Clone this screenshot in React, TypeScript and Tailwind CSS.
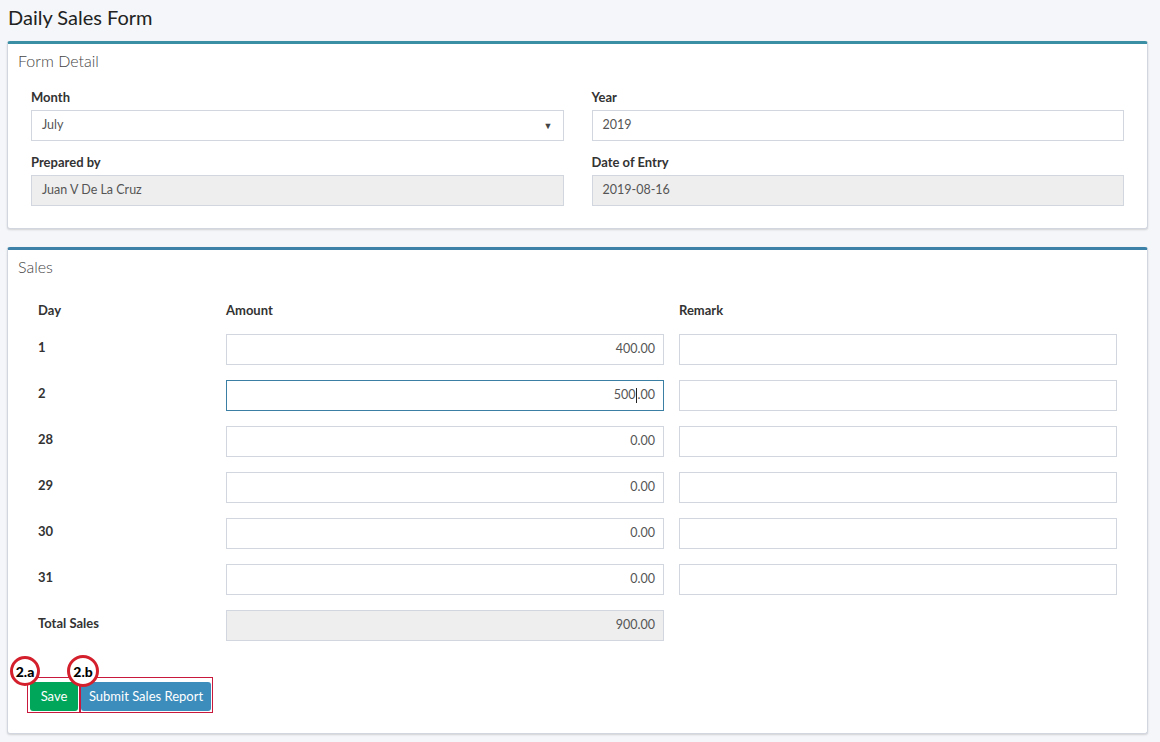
const FONT = { fontFamily: "Lato, 'Open Sans', 'Liberation Sans', sans-serif" };

const days = [
  { day: "1", amount: "400.00" },
  { day: "2", amount: "500.00", focus: true },
  { day: "28", amount: "0.00" },
  { day: "29", amount: "0.00" },
  { day: "30", amount: "0.00" },
  { day: "31", amount: "0.00" },
];

function Field({ label, value, disabled, select }: { label: string; value: string; disabled?: boolean; select?: boolean }) {
  return (
    <div>
      <div className="h-[18px] text-[13px] font-bold leading-[18px] text-[#333]">{label}</div>
      <div
        className={`mt-[4px] flex h-[31px] items-center justify-between border border-[#d2d6de] px-[10px] text-[12.5px] text-[#555] ${
          disabled ? "bg-[#eeeeee]" : "bg-white"
        }`}
      >
        <span>{value}</span>
        {select && <span className="text-[9px] text-[#444]">▼</span>}
      </div>
    </div>
  );
}

function Box({ title, color, children }: { title: string; color: string; children: React.ReactNode }) {
  return (
    <div
      className="rounded-[3px] border border-t-[3px] border-[#d2d6de] bg-white shadow-[0_1px_2px_rgba(0,0,0,0.15)]"
      style={{ borderTopColor: color }}
    >
      <div className="flex h-[34px] items-center px-[10px] text-[16px] font-light text-[#444]">{title}</div>
      {children}
    </div>
  );
}

export default function App() {
  return (
    <div className="min-h-[742px] bg-[#f4f6f9] pl-[7px] pr-[12px]" style={FONT}>
      <h1 className="h-[41px] pt-[4px] pl-[1px] text-[20px] leading-[26px] font-normal text-[#222]">Daily Sales Form</h1>

      <Box title="Form Detail" color="#3b8fa4">
        <div className="grid grid-cols-2 gap-x-[28px] gap-y-[12px] px-[23px] pt-[10px] pb-[22px]">
          <Field label="Month" value="July" select />
          <Field label="Year" value="2019" />
          <Field label="Prepared by" value="Juan V De La Cruz" disabled />
          <Field label="Date of Entry" value="2019-08-16" disabled />
        </div>
      </Box>

      <div className="h-[18px]" />

      <Box title="Sales" color="#3d80a8">
        <div className="pl-[30px] pr-[30px] pt-[17px]">
          <div className="grid grid-cols-[173px_438px_438px] gap-x-[15px] text-[13px] font-bold text-[#333]">
            <div className="h-[18px] leading-[18px]">Day</div>
            <div className="h-[18px] leading-[18px]">Amount</div>
            <div className="h-[18px] leading-[18px]">Remark</div>
          </div>
          <div className="mt-[15px] flex flex-col gap-y-[15px]">
            {days.map((d) => (
              <div key={d.day} className="grid grid-cols-[173px_438px_438px] gap-x-[15px]">
                <div className="flex h-[31px] items-center pb-[4px] text-[13px] font-bold text-[#333]">{d.day}</div>
                <div
                  className={`flex h-[31px] items-center justify-end border bg-white px-[8px] text-[12.5px] text-[#555] ${
                    d.focus ? "border-[#3c7fa5]" : "border-[#d2d6de]"
                  }`}
                >
                  {d.focus ? (
                    <>
                      500<span className="mx-[0.5px] inline-block h-[15px] w-px bg-[#222]" />.00
                    </>
                  ) : (
                    d.amount
                  )}
                </div>
                <div className="h-[31px] border border-[#d2d6de] bg-white" />
              </div>
            ))}
            <div className="grid grid-cols-[173px_438px_438px] gap-x-[15px]">
              <div className="flex h-[31px] items-center pb-[4px] text-[13px] font-bold text-[#333]">Total Sales</div>
              <div className="flex h-[31px] items-center justify-end border border-[#d2d6de] bg-[#eeeeee] px-[8px] text-[12.5px] text-[#555]">
                900.00
              </div>
              <div />
            </div>
          </div>
        </div>

        <div className="relative mt-[41px] ml-[22px] flex gap-[3px] pb-[22px]">
          <button className="h-[29px] w-[48px] rounded-[3px] bg-[#00a65a] text-[13px] text-white">Save</button>
          <button className="h-[29px] w-[130px] rounded-[3px] bg-[#3c8dbc] text-[13px] text-white">Submit Sales Report</button>

          <div className="pointer-events-none absolute left-[-3px] top-[-5px] h-[36px] w-[53px] border border-[#c8193c]" />
          <div className="pointer-events-none absolute left-[50px] top-[-5px] h-[36px] w-[133px] border border-[#c8193c]" />
          <div className="absolute left-[-20px] top-[-26px] flex h-[30px] w-[30px] items-center justify-center rounded-full border-[3px] border-[#d4202c] bg-white text-[14px] font-black text-black">
            2.a
          </div>
          <div className="absolute left-[37px] top-[-27px] flex h-[32px] w-[32px] items-center justify-center rounded-full border-[3px] border-[#d4202c] bg-white text-[14px] font-black text-black">
            2.b
          </div>
        </div>
      </Box>
    </div>
  );
}
